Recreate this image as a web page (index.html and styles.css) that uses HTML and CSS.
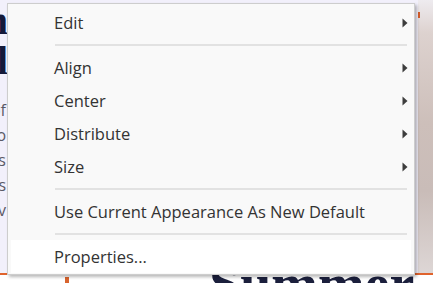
FILE: index.html
```html
<!DOCTYPE html>
<html>
<head>
<meta charset="utf-8">
<link rel="stylesheet" href="styles.css">
</head>
<body>
<div class="screen">
  <div class="page">
    <div class="page-main">
      <div class="sliver">
        <div class="heading">
          <span>Plan</span>
          <span>all</span>
        </div>
        <div class="copy">
          <span>of</span>
          <span>so</span>
          <span>is</span>
          <span>as</span>
          <span>v</span>
        </div>
      </div>
      <div class="under"></div>
      <div class="photo"><span class="photo-tag"></span></div>
    </div>
    <div class="rule"></div>
    <div class="footer">
      <span class="footer-mark"></span>
      <span class="footer-title">Summer</span>
    </div>
  </div>

  <div class="menu">
    <div class="item"><span class="label">Edit</span><svg class="arrow" width="6" height="10" viewBox="0 0 6 10"><path d="M0.5 0.5 L5.5 5 L0.5 9.5 Z"/></svg></div>
    <div class="sep"></div>
    <div class="item"><span class="label">Align</span><svg class="arrow" width="6" height="10" viewBox="0 0 6 10"><path d="M0.5 0.5 L5.5 5 L0.5 9.5 Z"/></svg></div>
    <div class="item"><span class="label">Center</span><svg class="arrow" width="6" height="10" viewBox="0 0 6 10"><path d="M0.5 0.5 L5.5 5 L0.5 9.5 Z"/></svg></div>
    <div class="item"><span class="label">Distribute</span><svg class="arrow" width="6" height="10" viewBox="0 0 6 10"><path d="M0.5 0.5 L5.5 5 L0.5 9.5 Z"/></svg></div>
    <div class="item"><span class="label">Size</span><svg class="arrow" width="6" height="10" viewBox="0 0 6 10"><path d="M0.5 0.5 L5.5 5 L0.5 9.5 Z"/></svg></div>
    <div class="sep"></div>
    <div class="item"><span class="label">Use Current Appearance As New Default</span></div>
    <div class="sep"></div>
    <div class="item active"><span class="label">Properties...</span></div>
  </div>
</div>
</body>
</html>
```

FILE: styles.css
```css
* { box-sizing: border-box; }
html, body { margin: 0; padding: 0; }
body { width: 433px; height: 283px; overflow: hidden; background: #ffffff; }

.screen {
  position: relative;
  width: 433px;
  height: 283px;
  overflow: hidden;
}

.page {
  display: grid;
  grid-template-rows: 273px 2px 8px;
  height: 283px;
}

.page-main {
  display: grid;
  grid-template-columns: 7px 1fr 15px;
  background: #f2f0fb;
}

.sliver {
  display: flex;
  flex-direction: column;
  align-items: flex-end;
  overflow: hidden;
}

.heading {
  display: flex;
  flex-direction: column;
  align-items: flex-end;
  font-family: "Liberation Serif", serif;
  font-weight: bold;
  font-size: 40px;
  line-height: 40px;
  color: #14193a;
  margin-top: 1px;
  margin-right: -1px;
}
.heading span { white-space: nowrap; }

.copy {
  display: flex;
  flex-direction: column;
  align-items: flex-end;
  margin-top: 17px;
  font-family: "Open Sans", sans-serif;
  font-size: 16px;
  line-height: 25px;
  color: #5a5a66;
  margin-right: 1px;
}
.copy span { white-space: nowrap; }

.under { background: #f2f0fb; }

.photo {
  background: linear-gradient(180deg, #eeebef 0%, #ddd2cf 12%, #cdbfba 45%, #c9bcb8 70%, #ddd6d5 100%);
}
.photo-tag {
  display: block;
  width: 2px;
  height: 6px;
  margin-top: 12px;
  background: #d35d2a;
}

.rule { background: #e0632c; }

.footer {
  display: flex;
  align-items: flex-start;
  background: #ffffff;
  overflow: hidden;
}
.footer-mark {
  width: 4px;
  height: 8px;
  margin-left: 65px;
  margin-top: 2px;
  background: #d8642e;
}
.footer-title {
  margin-left: 140px;
  margin-top: -11px;
  font-family: "Liberation Serif", serif;
  font-weight: bold;
  font-size: 56px;
  line-height: 40px;
  color: #1b1f3c;
  white-space: nowrap;
}

/* context menu */
.menu {
  position: absolute;
  left: 7px;
  top: 3px;
  width: 408px;
  background: #f9f9f9;
  border: 1px solid #cdcdcd;
  padding: 2px 3px 1px 3px;
  box-shadow: 2px 2px 3px rgba(0, 0, 0, 0.28);
  font-family: "Open Sans", sans-serif;
  font-size: 16.5px;
  color: #333333;
}

.item {
  display: flex;
  align-items: center;
  height: 33px;
  padding: 0 3px 0 43px;
}
.item .label { flex: 1; white-space: nowrap; }
.item.active { background: #ffffff; }

.arrow { display: block; fill: #3d3d3d; }

.sep {
  height: 2px;
  margin: 5px 4px 5px 44px;
  background: #e2e2e2;
}
```
